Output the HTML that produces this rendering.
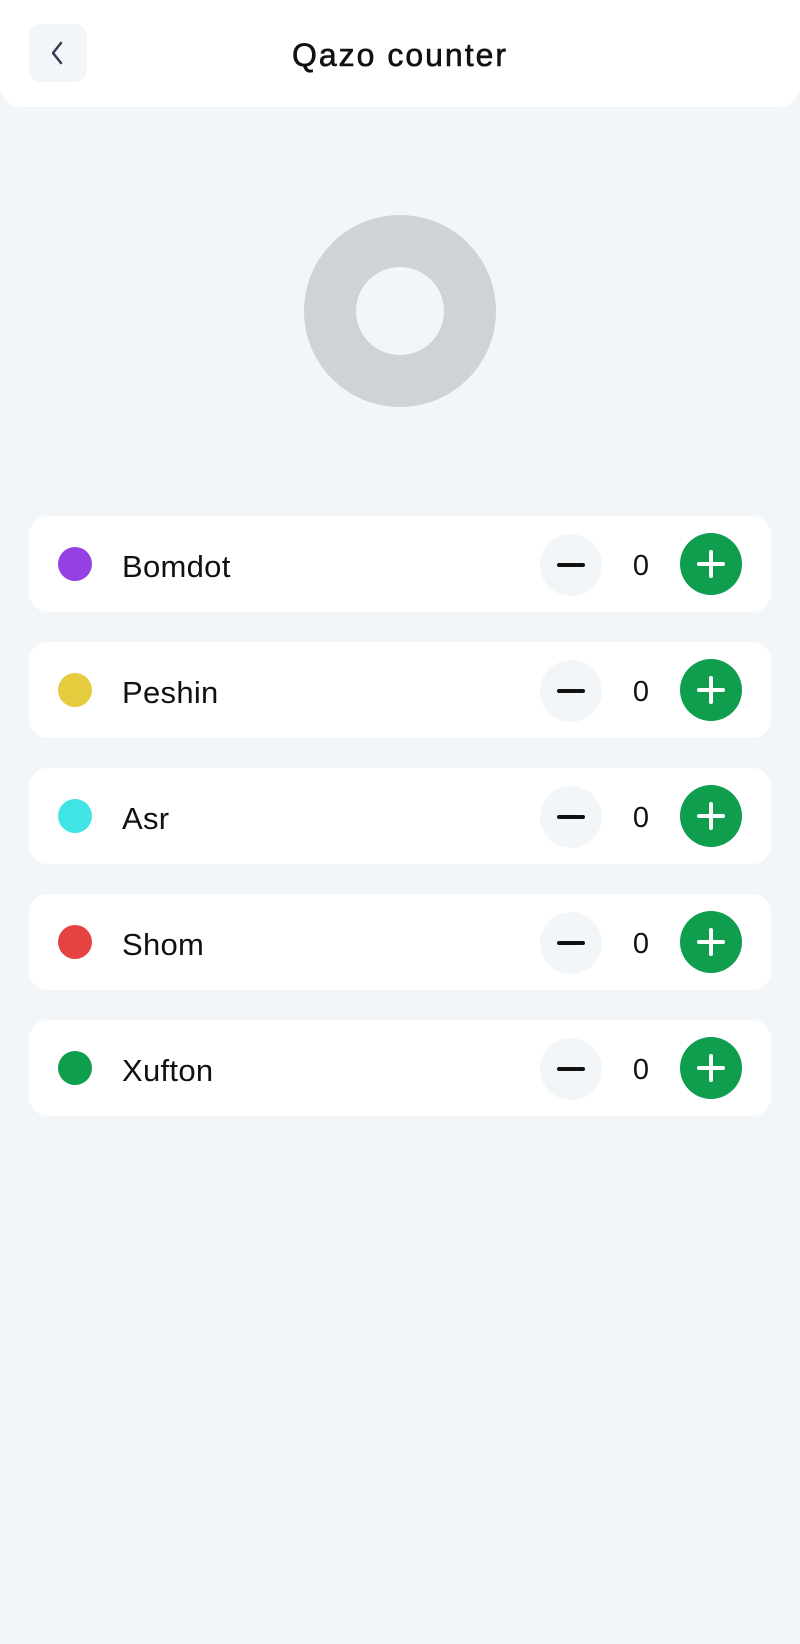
<!DOCTYPE html>
<html><head><meta charset="utf-8"><style>
*{margin:0;padding:0;box-sizing:border-box}
body{width:800px;height:1644px;background:#f3f6f9;font-family:"Liberation Sans",sans-serif;position:relative;overflow:hidden}
.hdr{position:absolute;left:0;top:0;width:800px;height:107px;background:#fff;border-radius:0 0 22px 22px}
.back{position:absolute;left:29px;top:24px;width:58px;height:58px;border-radius:12px;background:#f3f6f9}
.title{position:absolute;left:0;width:800px;top:37px;text-align:center;font-size:32px;font-weight:normal;color:#111;letter-spacing:2px;-webkit-text-stroke:0.6px #111}
.donut{position:absolute;left:304px;top:215px;width:192px;height:192px;border-radius:50%;background:#d0d3d6}
.donut:after{content:"";position:absolute;left:52px;top:52px;width:88px;height:88px;border-radius:50%;background:#f3f6f9}
.card{position:absolute;left:29px;width:742px;height:96px;background:#fff;border-radius:19px}
.dot{position:absolute;left:29px;top:31px;width:34px;height:34px;border-radius:50%}
.lbl{position:absolute;left:93px;top:33px;font-size:31px;letter-spacing:0.3px;color:#111}
.minus{position:absolute;left:511px;top:18px;width:62px;height:62px;border-radius:50%;background:#f3f6f9}
.minus:after{content:"";position:absolute;left:17px;top:29px;width:28px;height:4px;background:#111;border-radius:2px}
.num{position:absolute;left:602px;top:34px;width:20px;text-align:center;font-size:29px;color:#111}
.plus{position:absolute;left:651px;top:17px;width:62px;height:62px;border-radius:50%;background:#0f9d4e}
.plus:before{content:"";position:absolute;left:17px;top:29px;width:28px;height:4px;background:#fff;border-radius:2px}
.plus:after{content:"";position:absolute;left:29px;top:17px;width:4px;height:28px;background:#fff;border-radius:2px}
</style></head><body>
<div class="hdr">
<div class="back"><svg width="58" height="58" viewBox="0 0 58 58"><path d="M32 19 L24 29 L32 39" fill="none" stroke="#2e3e4e" stroke-width="2.5" stroke-linecap="round" stroke-linejoin="round"/></svg></div>
<div class="title">Qazo counter</div>
</div>
<div class="donut"></div>
<div class="card" style="top:516px"><div class="dot" style="background:#9341e3"></div><div class="lbl">Bomdot</div><div class="minus"></div><div class="num">0</div><div class="plus"></div></div>
<div class="card" style="top:642px"><div class="dot" style="background:#e5cb3e"></div><div class="lbl">Peshin</div><div class="minus"></div><div class="num">0</div><div class="plus"></div></div>
<div class="card" style="top:768px"><div class="dot" style="background:#40e4e4"></div><div class="lbl">Asr</div><div class="minus"></div><div class="num">0</div><div class="plus"></div></div>
<div class="card" style="top:894px"><div class="dot" style="background:#e54242"></div><div class="lbl">Shom</div><div class="minus"></div><div class="num">0</div><div class="plus"></div></div>
<div class="card" style="top:1020px"><div class="dot" style="background:#0f9d4e"></div><div class="lbl">Xufton</div><div class="minus"></div><div class="num">0</div><div class="plus"></div></div>
</body></html>
